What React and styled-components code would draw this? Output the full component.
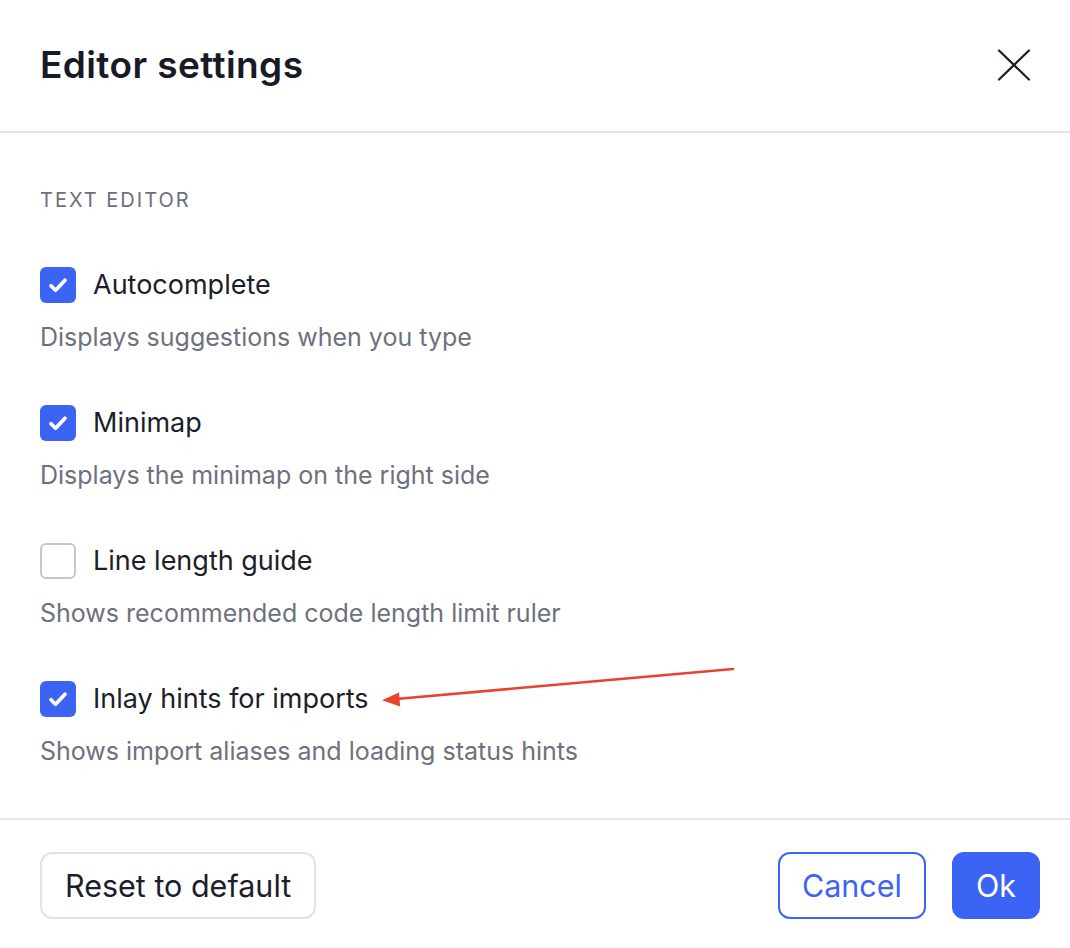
import React, { useState } from "react";
import styled, { createGlobalStyle } from "styled-components";

const GlobalStyle = createGlobalStyle`
  html, body { margin: 0; padding: 0; background: #ffffff; }
  body { font-family: Inter, "Noto Sans", "Liberation Sans", sans-serif; -webkit-font-smoothing: antialiased; }
  * { box-sizing: border-box; }
`;

const Dialog = styled.div`
  position: relative;
  width: 1070px;
  height: 948px;
  background: #ffffff;
  display: flex;
  flex-direction: column;
`;

const Header = styled.header`
  height: 133px;
  display: flex;
  align-items: center;
  justify-content: space-between;
  padding: 0 40px 2px 40px;
  border-bottom: 2px solid #e3e5e9;
`;

const Title = styled.h1`
  margin: 0;
  font-size: 37px;
  font-weight: 600;
  color: #181a25;
  letter-spacing: 0.4px;
`;

const CloseButton = styled.button`
  width: 40px;
  height: 40px;
  margin-right: -4px;
  padding: 0;
  border: none;
  background: transparent;
  display: flex;
  align-items: center;
  justify-content: center;
  color: #1b1e2b;
  cursor: pointer;
`;

const Body = styled.main`
  flex: 1;
  padding: 55px 40px 0 40px;
  display: flex;
  flex-direction: column;
`;

const SectionLabel = styled.div`
  font-size: 20px;
  line-height: 24px;
  letter-spacing: 2px;
  color: #6c6f7c;
  text-transform: uppercase;
  margin-bottom: 55px;
`;

const Options = styled.div`
  display: flex;
  flex-direction: column;
  gap: 54px;
`;

const Option = styled.div`
  display: flex;
  flex-direction: column;
  gap: 20px;
`;

const OptionRow = styled.label`
  display: flex;
  align-items: center;
  gap: 17px;
  height: 36px;
  cursor: pointer;
`;

const Box = styled.span`
  width: 36px;
  height: 36px;
  border-radius: 6px;
  flex: none;
  display: flex;
  align-items: center;
  justify-content: center;
  background: ${(p) => (p.$checked ? "#3c64f4" : "#ffffff")};
  border: ${(p) => (p.$checked ? "none" : "2px solid #c5c7cd")};
`;

const OptionLabel = styled.span`
  font-size: 27px;
  line-height: 32px;
  color: #1b1e2b;
`;

const Description = styled.div`
  font-size: 25px;
  line-height: 28px;
  color: #6e717e;
`;

const Footer = styled.footer`
  height: 130px;
  border-top: 2px solid #e3e5e9;
  display: flex;
  align-items: center;
  justify-content: space-between;
  padding: 2px 30px 0 40px;
`;

const Actions = styled.div`
  display: flex;
  gap: 26px;
`;

const Button = styled.button`
  height: 67px;
  padding: 0 ${(p) => p.$pad}px;
  border-radius: 12px;
  font-family: inherit;
  font-size: 30.5px;
  cursor: pointer;
  background: ${(p) => (p.$variant === "primary" ? "#3c64f4" : "#ffffff")};
  color: ${(p) =>
    p.$variant === "primary" ? "#ffffff" : p.$variant === "outline" ? "#3c64f4" : "#1b1e2b"};
  border: 2px solid
    ${(p) =>
      p.$variant === "primary" ? "#3c64f4" : p.$variant === "outline" ? "#3c64f4" : "#e1e3e8"};
`;

const Annotation = styled.svg`
  position: absolute;
  left: 0;
  top: 0;
  pointer-events: none;
`;

const CheckIcon = () => (
  <svg width="28" height="28" viewBox="0 0 24 24" fill="none">
    <path
      d="M6 12.6l3.9 3.9L18 8"
      stroke="#ffffff"
      strokeWidth="3.2"
      strokeLinecap="round"
      strokeLinejoin="round"
    />
  </svg>
);

const options = [
  { label: "Autocomplete", desc: "Displays suggestions when you type", checked: true },
  { label: "Minimap", desc: "Displays the minimap on the right side", checked: true },
  { label: "Line length guide", desc: "Shows recommended code length limit ruler", checked: false },
  { label: "Inlay hints for imports", desc: "Shows import aliases and loading status hints", checked: true },
];

export default function App() {
  const [state, setState] = useState(options.map((o) => o.checked));
  return (
    <>
      <GlobalStyle />
      <Dialog>
        <Header>
          <Title>Editor settings</Title>
          <CloseButton aria-label="Close">
            <svg width="34" height="34" viewBox="0 0 34 34" fill="none">
              <path d="M2 2.5L32 31.5M32 2.5L2 31.5" stroke="currentColor" strokeWidth="2.2" strokeLinecap="round" />
            </svg>
          </CloseButton>
        </Header>
        <Body>
          <SectionLabel>Text editor</SectionLabel>
          <Options>
            {options.map((o, i) => (
              <Option key={o.label}>
                <OptionRow
                  onClick={() => setState((s) => s.map((v, j) => (j === i ? !v : v)))}
                >
                  <Box $checked={state[i]}>{state[i] && <CheckIcon />}</Box>
                  <OptionLabel>{o.label}</OptionLabel>
                </OptionRow>
                <Description>{o.desc}</Description>
              </Option>
            ))}
          </Options>
        </Body>
        <Footer>
          <Button $pad={23}>Reset to default</Button>
          <Actions>
            <Button $variant="outline" $pad={22}>Cancel</Button>
            <Button $variant="primary" $pad={22}>Ok</Button>
          </Actions>
        </Footer>
        <Annotation width="1070" height="948" viewBox="0 0 1070 948">
          <line x1="733" y1="669" x2="396" y2="699" stroke="#e8432f" strokeWidth="2.6" strokeLinecap="round" />
          <path d="M382 700.3L399 692.5L400.2 706.5Z" fill="#e8432f" />
        </Annotation>
      </Dialog>
    </>
  );
}
